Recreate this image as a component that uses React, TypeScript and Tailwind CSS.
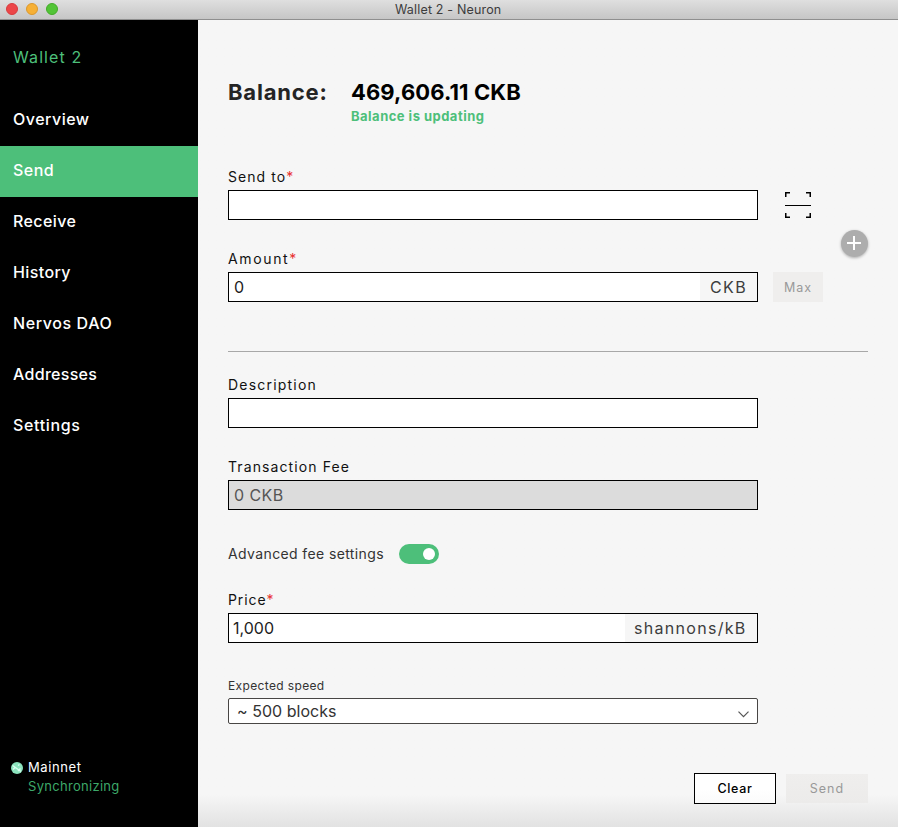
import React from "react";

const navItems = [
  { label: "Overview", spacing: "tracking-[0.5px]" },
  { label: "Send", spacing: "tracking-[0.5px]", active: true },
  { label: "Receive", spacing: "tracking-[0.4px]" },
  { label: "History", spacing: "tracking-[0.4px]" },
  { label: "Nervos DAO", spacing: "tracking-[0.6px]" },
  { label: "Addresses", spacing: "tracking-[0.3px]" },
  { label: "Settings", spacing: "tracking-[0.65px]" },
];

function Label({ text, spacing, required }: { text: string; spacing: string; required?: boolean }) {
  return (
    <div className="flex h-[18px] items-center text-[14px] leading-[18px] whitespace-nowrap text-[#111]">
      <span className={spacing}>{text}</span>
      {required && <span className="text-[#e8312f]">*</span>}
    </div>
  );
}

function TitleBar() {
  return (
    <header className="flex h-5 shrink-0 items-center border-b border-[#8f8f8f] bg-linear-to-b from-[#dfdfdf] to-[#c6c6c6] pl-1.5">
      <div className="flex h-full w-[389px] gap-2 pt-[3px]">
        <span className="size-3 rounded-full border border-[#d83b3d] bg-[#ec4648]" />
        <span className="size-3 rounded-full border border-[#dc982c] bg-[#f6b035]" />
        <span className="size-3 rounded-full border border-[#43ab28] bg-[#52c436]" />
      </div>
      <span className="pt-0.5 text-[12.5px] leading-none tracking-[0.17px] text-[#3c3c3c]">Wallet 2 - Neuron</span>
    </header>
  );
}

function Sidebar() {
  return (
    <aside className="flex w-[198px] shrink-0 flex-col bg-black">
      <div className="flex h-[75px] items-center pb-0.5 pl-[13px] text-[16px] tracking-[1.1px] text-[#4dbf7a]">Wallet 2</div>
      <nav>
        {navItems.map((item) => (
          <div
            key={item.label}
            className={`flex h-[51px] items-center pb-1 pl-[13px] text-[16px] font-medium text-white ${item.spacing} ${item.active ? "bg-[#4dbf7a]" : ""}`}
          >
            {item.label}
          </div>
        ))}
      </nav>
      <div className="mt-auto pb-[31px] pl-[11px]">
        <div className="flex h-[19px] items-center gap-[5px]">
          <svg width="12" height="12" viewBox="0 0 12 12">
            <circle cx="6" cy="6" r="6" fill="#8be3bd" />
            <path d="M1.5 3.5 10 9.5M2 7.5l2-2M7 9l2.500-2.500M7 3.500l1.500-1" stroke="#d8fff0" strokeWidth="1.5" />
          </svg>
          <span className="text-[13px] tracking-[0.6px] text-white">Mainnet</span>
        </div>
        <div className="flex h-[19px] items-center pl-[17px] text-[13px] tracking-[0.3px] text-[#3da869]">Synchronizing</div>
      </div>
    </aside>
  );
}

function ScanIcon() {
  return (
    <svg width="26" height="26" viewBox="0 0 26 26" fill="none" stroke="#000">
      <path d="M5 .75H.75V5M21 .75h4.25V5M5 25.25H.75V21M21 25.25h4.25V21" strokeWidth="1.5" />
      <path d="M0 13.5h26" />
    </svg>
  );
}

export default function App() {
  return (
    <div className="flex h-[827px] w-[898px] flex-col overflow-hidden bg-[#f6f6f6] font-['Inter','Liberation_Sans',sans-serif]">
      <TitleBar />
      <div className="flex min-h-0 flex-1">
        <Sidebar />
        <main className="flex flex-1 flex-col bg-linear-to-b from-[#f6f6f6] from-[96%] to-[#e2e2e2] pr-[30px] pl-[30px]">
          <section className="flex h-[148px] pt-[59px]">
            <h1 className="w-[123px] text-[22px] leading-[26px] font-bold tracking-[0.8px] text-[#242424]">Balance:</h1>
            <div>
              <div className="text-[22px] leading-[26px] font-bold tracking-[0.1px] text-black">469,606.11 CKB</div>
              <div className="mt-[1px] text-[13px] leading-5 font-bold tracking-[0.48px] text-[#4dbf7a]">Balance is updating</div>
            </div>
          </section>

          <section className="flex h-[184px] justify-between border-b border-[#a8a8a8]">
            <div className="w-[595px]">
              <Label text="Send to" spacing="tracking-[1.05px]" required />
              <div className="mt-1 flex items-center">
                <div className="h-[30px] w-[530px] border border-black bg-white" />
                <div className="ml-[27px]">
                  <ScanIcon />
                </div>
              </div>
              <div className="mt-[30px]">
                <Label text="Amount" spacing="tracking-[1.65px]" required />
              </div>
              <div className="mt-1 flex">
                <div className="flex h-[30px] w-[530px] justify-between border border-black bg-white text-[16px] leading-7">
                  <span className="pl-[5px] text-[#222]">0</span>
                  <span className="w-[57px] bg-[#f6f6f6] pl-2.5 tracking-[1.4px] text-[#3d3d3d]">CKB</span>
                </div>
                <button className="ml-[15px] h-[30px] w-[50px] bg-[#efeeed] pt-0.5 text-[12.5px] tracking-[0.9px] text-[#999]">Max</button>
              </div>
            </div>
            <button className="mt-[62px] size-[27px] shrink-0 rounded-full bg-[#adadad] shadow-[0_1px_3px_rgba(0,0,0,0.3)]">
              <svg width="27" height="27" viewBox="0 0 27 27" stroke="#fff" strokeWidth="2">
                <path d="M13 6v14M6 13h14" />
              </svg>
            </button>
          </section>

          <section className="pt-6">
            <Label text="Description" spacing="tracking-[1.2px]" />
            <div className="mt-1 h-[30px] w-[530px] border border-black bg-white" />
            <div className="mt-[30px]">
              <Label text="Transaction Fee" spacing="tracking-[1.1px]" />
            </div>
            <div className="mt-1 h-[30px] w-[530px] border border-black bg-[#dcdcdc] pl-[5px] text-[16px] leading-7 tracking-[0.4px] text-[#555]">0 CKB</div>
            <div className="mt-[34px] flex h-5 items-center">
              <span className="w-[171px] pb-0.5 text-[14px] tracking-[0.38px] whitespace-nowrap text-[#333]">Advanced fee settings</span>
              <span className="flex h-5 w-10 items-center justify-end rounded-full bg-[#4dbf7a] pr-1">
                <span className="size-3 rounded-full bg-white" />
              </span>
            </div>
            <div className="mt-[27px]">
              <Label text="Price" spacing="tracking-[0.9px]" required />
            </div>
            <div className="mt-1 flex h-[30px] w-[530px] justify-between border border-black bg-white text-[16px] leading-7">
              <span className="pl-1 text-[#222]">1,000</span>
              <span className="w-[132px] bg-[#f6f6f6] pl-[9px] tracking-[1.3px] text-[#3d3d3d]">shannons/kB</span>
            </div>
            <div className="mt-[34px] h-[18px] text-[12px] leading-[18px] tracking-[0.36px] text-[#333]">Expected speed</div>
            <div className="mt-[3px] flex h-[26px] w-[530px] items-center justify-between rounded-[2px] border border-[#484644] bg-white pr-2 pl-2 text-[16px] tracking-[0.03px] text-[#333]">
              <span>~ 500 blocks</span>
              <svg className="mt-1.5" width="11" height="7" viewBox="0 0 11 7" fill="none" stroke="#555" strokeWidth="1.2">
                <path d="m.5.7 5 5 5-5" />
              </svg>
            </div>
          </section>

          <div className="mt-[49px] flex justify-end gap-[10px] text-[12.5px]">
            <button className="h-[31px] w-[82px] border border-black bg-linear-to-b from-white from-50% to-[#fbfbfb] pt-px font-medium tracking-[0.7px] text-black">Clear</button>
            <button className="mt-[1px] h-[29px] w-[82px] bg-linear-to-b from-[#efeeed] to-[#ecebea] pt-px tracking-[1px] text-[#999]">Send</button>
          </div>
        </main>
      </div>
    </div>
  );
}
